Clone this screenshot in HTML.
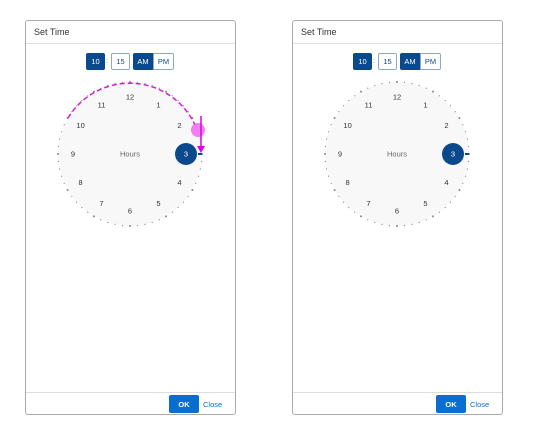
<!DOCTYPE html><html><head><style>
body{margin:0;width:535px;height:437px;background:#fff;font-family:"Liberation Sans",sans-serif;position:relative;overflow:hidden}
.dlg{position:absolute;top:20px;width:209px;height:393px;border:1px solid #aaa;border-radius:3px;background:#fff}
.hd{height:22px;border-bottom:1px solid #ddd;font-size:9px;color:#333;line-height:22px;padding-left:8px}
.ft{position:absolute;left:0;right:0;bottom:0;height:21px;border-top:1px solid #ddd}
.ok{position:absolute;left:143px;top:2px;width:30px;height:18px;background:#0a6ed1;color:#fff;font-size:7.5px;font-weight:bold;display:flex;align-items:center;justify-content:center;border-radius:2px}
.cl{position:absolute;left:177px;top:2px;height:18px;font-size:7.5px;color:#0a6ed1;display:flex;align-items:center}
.b{position:absolute;top:32px;height:17px;font-size:7.5px;display:flex;align-items:center;justify-content:center;border:1px solid #8fa8c8;box-sizing:border-box;border-radius:2px}
svg{position:absolute;left:0;top:0}
</style></head><body>
<div class="dlg" style="left:25px"><div class="hd">Set Time</div>
<div class="b" style="left:60px;width:19px;background:#0a4a8c;color:#fff;border-color:#0a4a8c">10</div>
<div style="position:absolute;left:80px;top:32px;font-size:7px;line-height:17px;color:#666">:</div>
<div class="b" style="left:85px;width:19px;color:#0a4a8c">15</div>
<div class="b" style="left:107px;width:20px;background:#0a4a8c;color:#fff;border-color:#0a4a8c;border-radius:2px 0 0 2px">AM</div>
<div class="b" style="left:127px;width:21px;color:#0a4a8c;border-radius:0 2px 2px 0">PM</div>
<div class="ft"><div class="ok">OK</div><div class="cl">Close</div></div></div>
<div class="dlg" style="left:292px"><div class="hd">Set Time</div>
<div class="b" style="left:60px;width:19px;background:#0a4a8c;color:#fff;border-color:#0a4a8c">10</div>
<div style="position:absolute;left:80px;top:32px;font-size:7px;line-height:17px;color:#666">:</div>
<div class="b" style="left:85px;width:19px;color:#0a4a8c">15</div>
<div class="b" style="left:107px;width:20px;background:#0a4a8c;color:#fff;border-color:#0a4a8c;border-radius:2px 0 0 2px">AM</div>
<div class="b" style="left:127px;width:21px;color:#0a4a8c;border-radius:0 2px 2px 0">PM</div>
<div class="ft"><div class="ok">OK</div><div class="cl">Close</div></div></div>
<svg id="s" width="535" height="437" font-family="Liberation Sans" font-size="7.5"></svg>
<script>
var s='';
[130,397].forEach(function(cx,k){var cy=154;
s+='<circle cx="'+cx+'" cy="'+cy+'" r="72" fill="#f8f8f8"/>';
for(var i=0;i<60;i++){var a=i*6*Math.PI/180,x=cx+72*Math.sin(a),y=cy-72*Math.cos(a);s+='<circle cx="'+x.toFixed(1)+'" cy="'+y.toFixed(1)+'" r="'+(i%5?0.6:1)+'" fill="#888"/>';}
for(var h=1;h<=12;h++){var a=h*30*Math.PI/180,x=cx+57*Math.sin(a),y=cy-57*Math.cos(a)+2.7;
if(h==3){s+='<circle cx="'+(cx+56)+'" cy="'+cy+'" r="11" fill="#0a4a8c"/><rect x="'+(cx+68)+'" y="'+(cy-1)+'" width="4" height="2" fill="#0a4a8c"/><text x="'+(cx+56)+'" y="'+(cy+2.7)+'" fill="#fff" text-anchor="middle">3</text>';}
else s+='<text x="'+x.toFixed(1)+'" y="'+y.toFixed(1)+'" fill="#333" text-anchor="middle">'+h+'</text>';}
s+='<text x="'+cx+'" y="'+(cy+2.7)+'" fill="#666" text-anchor="middle">Hours</text>';
if(k==0){s+='<path d="M68 118 A72 72 0 0 1 195 125" fill="none" stroke="#d020d0" stroke-width="1.5" stroke-dasharray="5 3"/><circle cx="198" cy="130" r="7" fill="#f060f0" opacity="0.8"/><line x1="201" y1="116" x2="201" y2="147" stroke="#e000e0" stroke-width="1.5"/><path d="M197 146 L205 146 L201 153Z" fill="#e000e0"/>';}
});
document.getElementById('s').innerHTML=s;
</script>
</body></html>
